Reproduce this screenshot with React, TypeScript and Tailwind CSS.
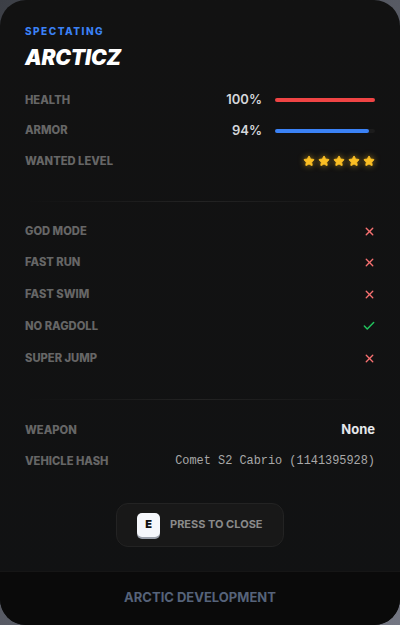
import { X, Check, Star } from "lucide-react";

const toggles: { label: string; on: boolean }[] = [
  { label: "God Mode", on: false },
  { label: "Fast Run", on: false },
  { label: "Fast Swim", on: false },
  { label: "No Ragdoll", on: true },
  { label: "Super Jump", on: false },
];

function Divider() {
  return <div className="mx-[25px] h-px bg-gradient-to-r from-transparent via-[#232323] to-transparent" />;
}

function Bar({ value, color }: { value: number; color: string }) {
  return (
    <div className="w-[100px] h-[4px] rounded-full bg-[#1c1c1c]">
      <div className={`${color} h-[4px] rounded-full`} style={{ width: `${value}%` }} />
    </div>
  );
}

const label = "flex-1 text-[11.2px] font-extrabold text-[#666666] uppercase";

export default function App() {
  return (
    <div className="w-[400px] h-[625px] bg-gradient-to-br from-[#3c3f46] to-[#747783] font-['Inter',sans-serif]">
      <div className="w-full h-full rounded-[26px] overflow-hidden bg-gradient-to-b from-[#121212] to-[#111213] flex flex-col">
        <div className="flex-1 flex flex-col">
          <div className="px-[25px] pt-[25px]">
            <div className="text-[10px] font-extrabold tracking-[0.15em] text-[#3b82f6] leading-[12px]">SPECTATING</div>
            <div className="mt-[9px] text-[21px] font-black italic text-white leading-[24px] tracking-[-0.01em]">ARCTICZ</div>
          </div>

          <div className="px-[25px] mt-[23px] flex flex-col gap-[16.5px]">
            <div className="flex items-center h-[14px]">
              <span className={label}>Health</span>
              <span className="text-[13px] font-semibold text-[#d4d6da] mr-[13px]">100%</span>
              <Bar value={100} color="bg-[#ef4444]" />
            </div>
            <div className="flex items-center h-[14px]">
              <span className={label}>Armor</span>
              <span className="text-[13px] font-semibold text-[#d4d6da] mr-[13px]">94%</span>
              <Bar value={94} color="bg-[#3b82f6]" />
            </div>
            <div className="flex items-center h-[14px]">
              <span className={label}>Wanted Level</span>
              <div className="flex gap-[3px]">
                {[0, 1, 2, 3, 4].map((i) => (
                  <Star key={i} size={12} className="text-[#fbbf24] fill-[#fbbf24] drop-shadow-[0_0_3px_rgba(251,191,36,0.6)]" />
                ))}
              </div>
            </div>
          </div>

          <div className="mt-[33px]">
            <Divider />
          </div>

          <div className="px-[25px] mt-[22px] flex flex-col gap-[17.75px]">
            {toggles.map((t) => (
              <div key={t.label} className="flex items-center h-[14px]">
                <span className={label}>{t.label}</span>
                {t.on ? (
                  <Check size={14} strokeWidth={2.5} className="text-[#22c55e] mr-[-1px]" />
                ) : (
                  <X size={13} strokeWidth={2.5} className="text-[#f87171] mr-[-0.5px]" />
                )}
              </div>
            ))}
          </div>

          <div className="mt-[34px]">
            <Divider />
          </div>

          <div className="px-[25px] mt-[23px] flex flex-col gap-[17.5px]">
            <div className="flex items-center h-[14px]">
              <span className={label}>Weapon</span>
              <span className="text-[13px] font-bold text-[#e5e7eb]">None</span>
            </div>
            <div className="flex items-center h-[14px]">
              <span className={label}>Vehicle Hash</span>
              <span className="text-[11.9px] font-['Liberation_Mono',monospace] text-[#a8a8a8]">Comet S2 Cabrio (1141395928)</span>
            </div>
          </div>

          <div className="flex justify-center mt-[34px]">
            <div className="w-[168px] h-[44px] rounded-[12px] bg-[#181818] border border-[#232323] flex items-center pl-[20px] gap-[10px]">
              <div className="w-[23px] h-[24px] rounded-[5px] bg-[#f5f7fb] shadow-[0_2px_0_#9aa0aa] flex items-center justify-center text-[11px] font-black text-[#111]">E</div>
              <span className="text-[11px] font-bold text-[#8a8a8a]">PRESS TO CLOSE</span>
            </div>
          </div>
        </div>

        <div className="h-[54px] bg-[#0a0a0a] border-t border-[#161616] flex items-center justify-center">
          <span className="text-[13px] font-bold text-[#56637a] mt-[-2px]">ARCTIC DEVELOPMENT</span>
        </div>
      </div>
    </div>
  );
}
